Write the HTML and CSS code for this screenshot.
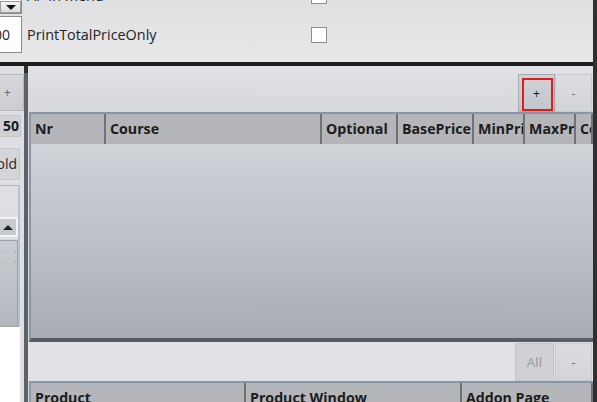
FILE: index.html
```html
<!DOCTYPE html>
<html lang="en">
<head>
    <meta charset="UTF-8">
    <title>Menu Courses</title>
    <link rel="stylesheet" href="styles.css">
</head>
<body>

<div class="window">
    <div class="settings">
        <div class="setting-row cut">
            <div class="combo">
                <span class="combo-btn">
                    <svg width="12" height="7" viewBox="0 0 12 7"><path d="M1 1 L6 6 L11 1 Z" fill="#111"/></svg>
                </span>
            </div>
            <span class="setting-label">AP in menu</span>
            <span class="check"></span>
        </div>
        <div class="setting-row">
            <div class="num-box">00</div>
            <span class="setting-label">PrintTotalPriceOnly</span>
            <span class="check"></span>
        </div>
    </div>

    <div class="divider"></div>

    <div class="main">
        <div class="side">
            <div class="side-btn">+</div>
            <div class="side-count">50</div>
            <div class="side-name">old</div>
            <div class="side-list">
                <div class="scroll-up">
                    <svg width="10" height="5" viewBox="0 0 10 5"><path d="M0 5 L5 0 L10 5 Z" fill="#222"/></svg>
                </div>
                <div class="scroll-track">
                    <span class="grip"></span>
                </div>
            </div>
            <div class="side-blank"></div>
        </div>

        <div class="splitter"></div>

        <div class="content">
            <div class="toolbar">
                <div class="tool-btn pressed">+<span class="focus-mark"></span></div>
                <div class="tool-btn">-</div>
            </div>

            <div class="grid courses">
                <div class="grid-head">
                    <div class="cell">Nr</div>
                    <div class="cell">Course</div>
                    <div class="cell">Optional</div>
                    <div class="cell">BasePrice</div>
                    <div class="cell">MinPrice</div>
                    <div class="cell">MaxPrice</div>
                    <div class="cell">Count</div>
                </div>
                <div class="grid-body"></div>
            </div>

            <div class="toolbar low">
                <div class="tool-btn wide disabled">All</div>
                <div class="tool-btn">-</div>
            </div>

            <div class="grid products">
                <div class="grid-head">
                    <div class="cell">Product</div>
                    <div class="cell">Product Window</div>
                    <div class="cell">Addon Page</div>
                </div>
            </div>
        </div>
    </div>
</div>

</body>
</html>
```

FILE: styles.css
```css
html, body {
    margin: 0;
    height: 100%;
}
body {
    font-family: "Open Sans", "Noto Sans", sans-serif;
    font-size: 13px;
    color: #1b1b1b;
    background-color: #2f2f2f;
    overflow: hidden;
}
.window {
    width: 597px;
    height: 402px;
    box-sizing: border-box;
    border-right: 4px solid #2f2f2f;
    display: flex;
    flex-direction: column;
    overflow: hidden;
}

/* settings strip on top */
.settings {
    height: 62px;
    flex-shrink: 0;
    background: linear-gradient(#e0e0e3, #e7e7e9);
    overflow: hidden;
}
.setting-row {
    display: flex;
    align-items: center;
    height: 39px;
}
.setting-row.cut {
    margin-top: -24px;
}
.combo {
    width: 40px;
    height: 37px;
    margin-left: -18px;
    box-sizing: border-box;
    border: 1px solid #8a8a8a;
    background-color: #ffffff;
    display: flex;
    justify-content: flex-end;
    align-items: flex-end;
}
.combo-btn {
    width: 21px;
    height: 12px;
    box-sizing: border-box;
    border: 1px solid #9c9c9c;
    background: linear-gradient(#f4f4f4, #dcdcdc);
    display: flex;
    justify-content: center;
    align-items: center;
}
.num-box {
    width: 40px;
    height: 37px;
    margin-left: -18px;
    box-sizing: border-box;
    border: 1px solid #8a8a8a;
    background-color: #ffffff;
    text-align: right;
    padding-right: 11px;
    line-height: 35px;
    font-size: 14px;
    color: #222222;
}
.setting-label {
    width: 284px;
    margin-left: 5px;
    font-size: 14.4px;
    color: #222222;
}
.check {
    width: 16px;
    height: 16px;
    box-sizing: border-box;
    border: 1px solid #8d8d8d;
    background-color: #ffffff;
}
.divider {
    height: 4px;
    flex-shrink: 0;
    background-color: #1e1e1e;
}

/* lower area */
.main {
    flex: 1;
    display: flex;
    min-height: 0;
}
.side {
    width: 24px;
    flex-shrink: 0;
    background-color: #dedfe2;
    display: flex;
    flex-direction: column;
    overflow: hidden;
    padding-top: 8px;
}
.side-btn {
    height: 37px;
    margin-left: -10px;
    box-sizing: border-box;
    border: 1px solid #b6b9be;
    background: linear-gradient(#d6d8dc, #cbcdd2);
    padding-left: 13px;
    line-height: 35px;
    font-size: 12px;
    color: #6a6a6a;
}
.side-count {
    height: 22px;
    margin-top: 4px;
    margin-left: -10px;
    margin-right: 3px;
    box-sizing: border-box;
    border: 1px solid #c4c6ca;
    background-color: #cfd1d5;
    text-align: right;
    padding-right: 1px;
    line-height: 20px;
    font-weight: bold;
    font-size: 14px;
}
.side-name {
    height: 32px;
    margin-top: 11px;
    margin-left: -10px;
    margin-right: 4px;
    box-sizing: border-box;
    border: 1px solid #c4c6ca;
    background-color: #d3d5d9;
    text-align: right;
    padding-right: 2px;
    line-height: 30px;
    font-size: 14px;
    color: #2a2a2a;
}
.side-list {
    height: 142px;
    margin-top: 5px;
    margin-right: 4px;
    box-sizing: border-box;
    border-top: 1px solid #a9b9cc;
    border-right: 2px solid #b4c2d3;
    background: linear-gradient(#dfe0e3, #d4d6da);
    padding-top: 31px;
}
.scroll-up {
    height: 20px;
    box-sizing: border-box;
    border: 2px solid #f2f3f5;
    border-left: none;
    background-color: #c7cace;
    display: flex;
    justify-content: center;
    align-items: center;
}
.scroll-track {
    height: 87px;
    margin-top: 3px;
    box-sizing: border-box;
    border: 1px solid #9da1a7;
    border-left: none;
    background: linear-gradient(#c9ccd1, #b4b8be);
    position: relative;
}
.grip {
    position: absolute;
    left: 5px;
    top: 10px;
    width: 1px;
    height: 1px;
    background-color: #8b8f95;
    box-shadow: 10px 0 #8b8f95, 0 10px #8b8f95, 10px 10px #8b8f95;
}
.side-blank {
    flex: 1;
    margin-right: 4px;
    background-color: #ffffff;
}
.splitter {
    width: 4px;
    flex-shrink: 0;
    margin-top: 7px;
    background-color: #5e6166;
}

.content {
    flex: 1;
    min-width: 0;
    display: flex;
    flex-direction: column;
    background: linear-gradient(#e1e2e5, #d8d9dd 40px);
    padding-left: 1px;
}
.toolbar {
    height: 46px;
    flex-shrink: 0;
    box-sizing: border-box;
    padding-top: 8px;
    display: flex;
    justify-content: flex-end;
}
.toolbar.low {
    height: 39px;
    padding-top: 1px;
    background-color: #e2e2e6;
    margin-left: -1px;
}
.tool-btn {
    width: 37px;
    box-sizing: border-box;
    border: 1px solid #c8cace;
    background: linear-gradient(#dcdde0, #d2d4d8);
    display: flex;
    justify-content: center;
    align-items: center;
    font-size: 12px;
    color: #6a6a6a;
    position: relative;
}
.tool-btn + .tool-btn {
    margin-right: 1px;
}
.tool-btn.pressed {
    border-color: #a7aab0;
    background: linear-gradient(#cfd1d5, #c3c6cb);
    color: #1a1a1a;
}
.tool-btn.wide {
    width: 39px;
    margin-right: 1px;
    background: #cfd1d5;
    border-color: #c3c5c9;
}
.tool-btn.disabled {
    color: #9b9b9b;
    font-size: 13.5px;
}
.focus-mark {
    position: absolute;
    left: 3px;
    top: 3px;
    width: 31px;
    height: 33px;
    box-sizing: border-box;
    border: 2px solid #e3191b;
}

/* data grids */
.grid {
    display: flex;
    flex-direction: column;
    box-sizing: border-box;
    border-top: 2px solid #8796a9;
    border-left: 2px solid #8796a9;
    overflow: hidden;
}
.grid.courses {
    height: 230px;
    flex-shrink: 0;
    border-bottom: 4px solid #575c63;
}
.grid.products {
    flex: 1;
}
.grid-head {
    display: grid;
    height: 30px;
    flex-shrink: 0;
    background-color: #b4b6ba;
}
.courses .grid-head {
    grid-template-columns: 75px 216px 76px 76px 51px 51px 1fr;
}
.products .grid-head {
    grid-template-columns: 215px 216px 1fr;
}
.cell {
    border-right: 2px solid #6f7277;
    padding-left: 4px;
    font-weight: bold;
    font-size: 14.2px;
    line-height: 30px;
    white-space: nowrap;
    overflow: hidden;
    color: #1c1c1c;
}
.grid-body {
    flex: 1;
    background: linear-gradient(#d0d3d8, #a8adb5);
}
```
